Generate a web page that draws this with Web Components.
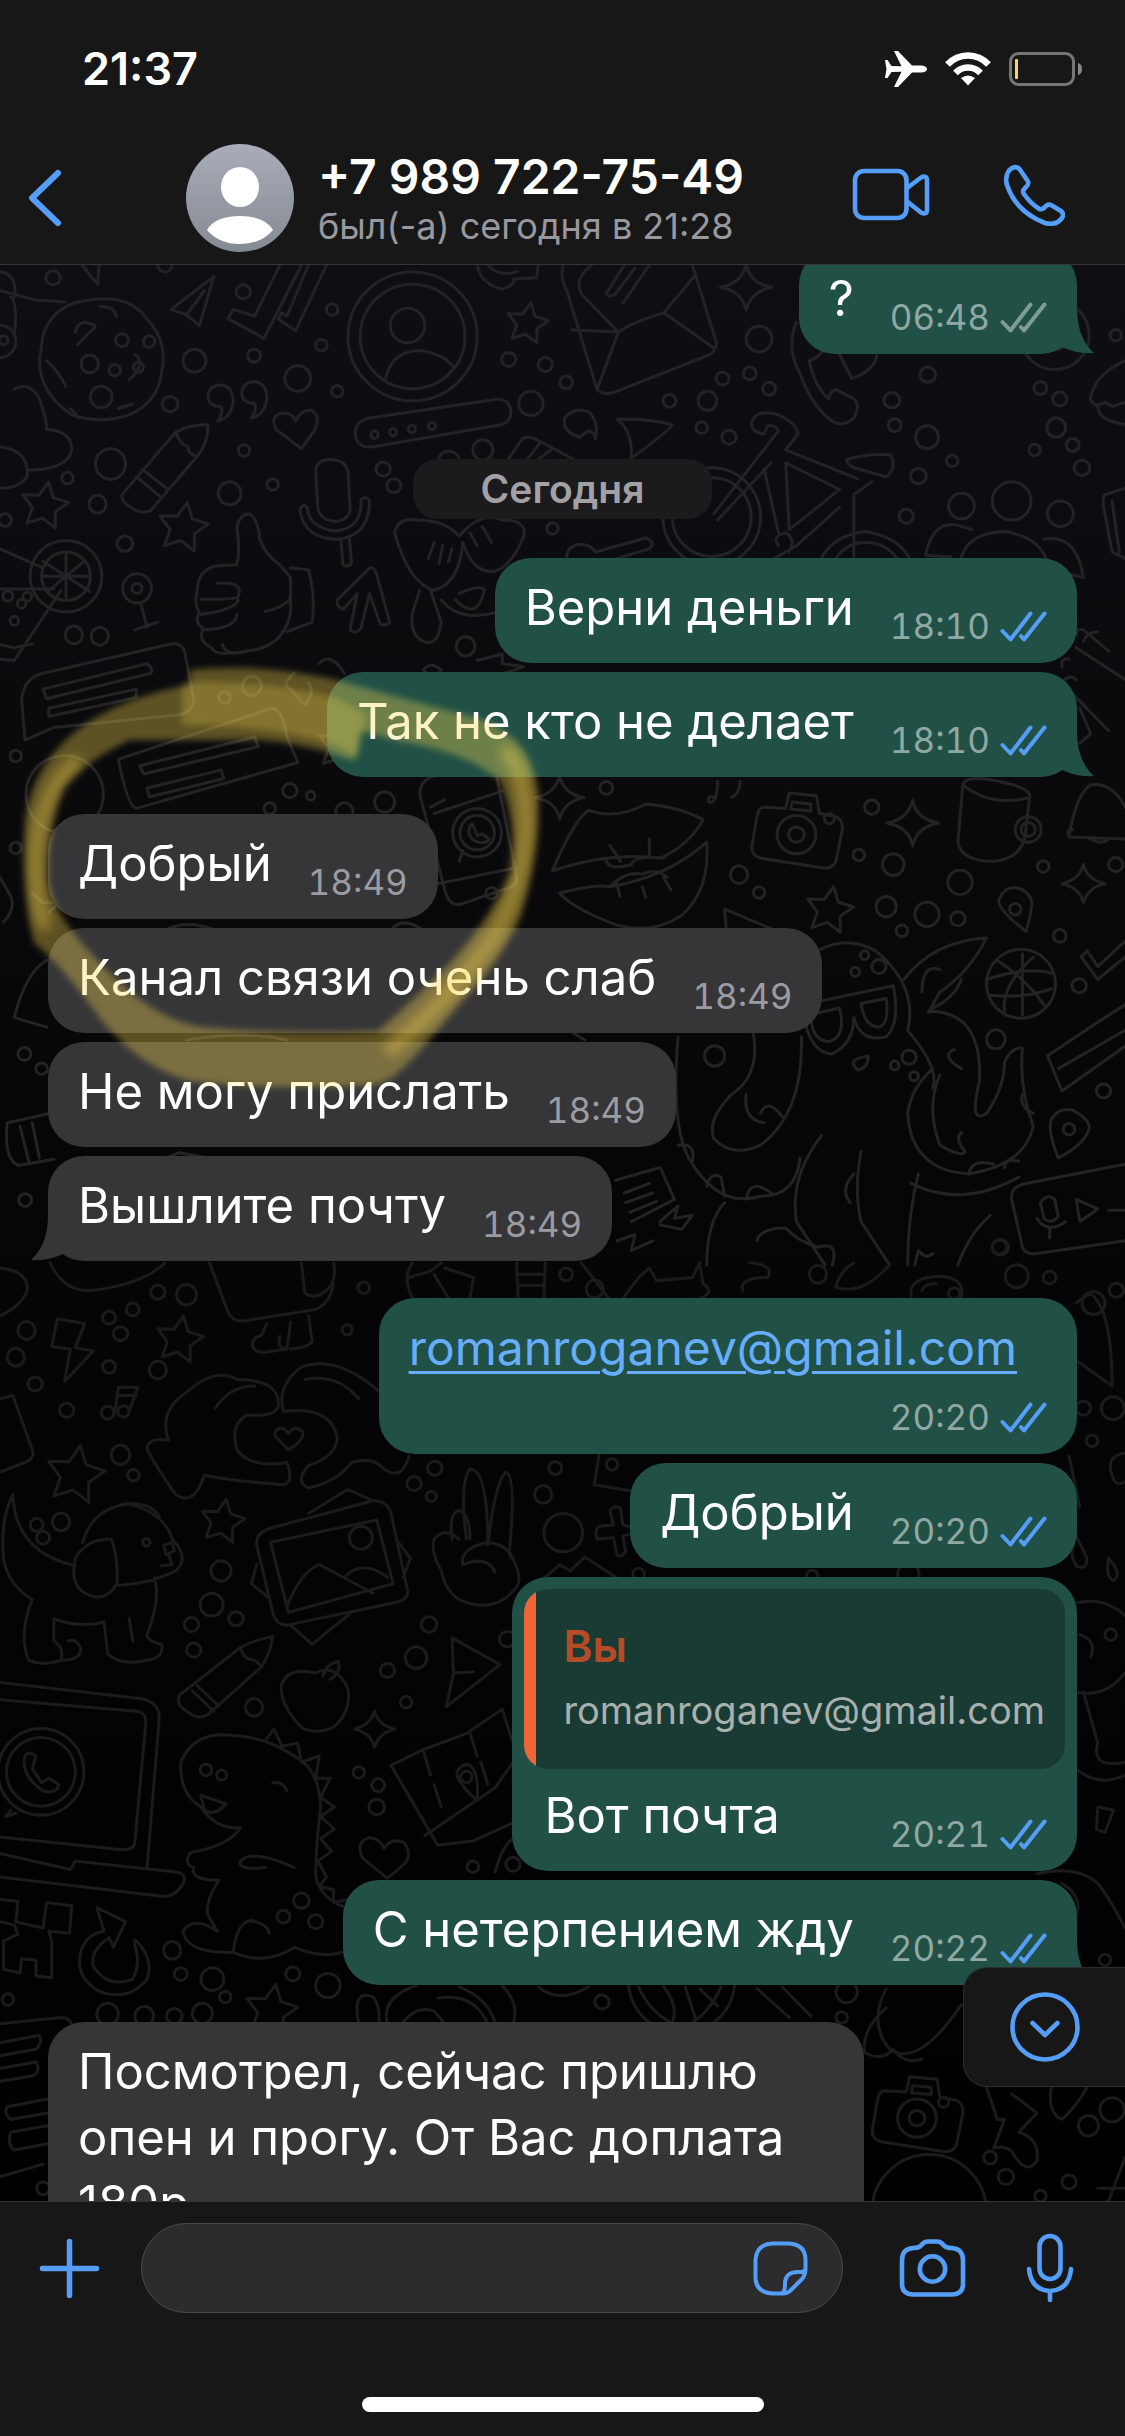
<!DOCTYPE html>
<html lang="ru">
<head>
<meta charset="utf-8">
<meta name="viewport" content="width=device-width, initial-scale=1">
<title>Чат</title>
<style>
  body {
    margin: 0;
    background: #171717;
    font-family: Inter, "Liberation Sans", sans-serif;
    color: #fff;
  }
</style>
</head>
<body>
<chat-screen>
  <status-bar slot="top" time="21:37"></status-bar>
  <chat-header slot="top">
    <span slot="name">+7 989 722-75-49</span>
    <span slot="seen">был(-а) сегодня в 21:28</span>
  </chat-header>

  <chat-message out tail read="no" time="06:48">?</chat-message>
  <chat-date>Сегодня</chat-date>
  <chat-message out time="18:10">Верни деньги</chat-message>
  <chat-message out tail time="18:10">Так не кто не делает</chat-message>
  <chat-message first time="18:49">Добрый</chat-message>
  <chat-message time="18:49">Канал связи очень слаб</chat-message>
  <chat-message time="18:49">Не могу прислать</chat-message>
  <chat-message tail time="18:49">Вышлите почту</chat-message>
  <chat-message out first stacked time="20:20"><a href="mailto:romanroganev@gmail.com">romanroganev@gmail.com</a></chat-message>
  <chat-message out time="20:20">Добрый</chat-message>
  <chat-message out time="20:21">
    <chat-quote slot="quote" author="Вы">romanroganev@gmail.com</chat-quote>
    Вот почта
  </chat-message>
  <chat-message out tail time="20:22">С нетерпением жду</chat-message>
  <chat-message first stacked>Посмотрел, сейчас пришлю опен и прогу. От Вас доплата 180р</chat-message>

  <chat-composer slot="bottom"></chat-composer>
</chat-screen>

<script>
  class StatusBar extends HTMLElement {
    constructor() {
      super();
      this.attachShadow({ mode: "open" });
      this.shadowRoot.innerHTML = `
        <style>
          :host {
            display: flex;
            align-items: center;
            justify-content: space-between;
            height: 132px;
            padding: 6px 42px 0 82px;
            box-sizing: border-box;
          }
          time { font-size: 45px; font-weight: 600; line-height: 54px; }
          div { display: flex; align-items: center; gap: 18px; }
          svg { display: block; }
        </style>
        <time>${this.getAttribute("time")}</time>
        <div>
          <svg width="42" height="38" viewBox="0 0 42 38" fill="#fff"><path d="M0 10h2.500l4 6 10 .3L9 1h4l14 14.500h10q5 1 5 3.500t-5 3.500H27L13 37H9l7.500-15.300-10 .3-4 6H0l1.500-9z"/></svg>
          <svg width="46" height="34" viewBox="0 0 46 34" fill="none" stroke="#fff" stroke-width="6.500"><path d="M2.500 12.500Q11 3.500 23 3.500T43.500 12.500M10.500 21Q15.500 15.500 23 15.500T35.500 21"/><path d="M16 26q7-5 14 0l-7 7.500z" fill="#fff" stroke="none"/></svg>
          <svg width="74" height="34" viewBox="0 0 74 34" fill="none"><rect x="1.500" y="1.500" width="63" height="31" rx="8" stroke="#757576" stroke-width="3"/><path d="M69 11q4 1 4 6t-4 6z" fill="#8a8a8b"/><rect x="6" y="7" width="3" height="20" rx="1" fill="#fbd64c"/></svg>
        </div>
      `;
    }
  }

  class ChatHeader extends HTMLElement {
    constructor() {
      super();
      this.attachShadow({ mode: "open" });
      this.shadowRoot.innerHTML = `
        <style>
          :host {
            display: flex;
            align-items: center;
            height: 133px;
            padding: 0 60px 0 26px;
            box-sizing: border-box;
            border-bottom: 1px solid #353537;
          }
          button { padding: 0; border: 0; background: none; color: #559ef8; }
          svg { display: block; }
          .back { width: 160px; }
          .who { flex: 1; padding: 2px 0 0 24px; }
          .name { font-size: 48px; font-weight: 600; line-height: 54px; }
          .seen { font-size: 36px; line-height: 44px; color: #98989f; }
          .calls { display: flex; gap: 73px; padding-bottom: 6px; align-items: center; }
        </style>
        <button class="back" aria-label="Назад">
          <svg width="36" height="58" viewBox="0 0 36 58" fill="none" stroke="currentColor" stroke-width="6" stroke-linecap="round" stroke-linejoin="round"><path d="M32 4 6 29l26 25"/></svg>
        </button>
        <svg width="108" height="108" viewBox="0 0 108 108">
          <defs><linearGradient id="g" x2="0" y2="1"><stop stop-color="#a9adb9"/><stop offset="1" stop-color="#858991"/></linearGradient></defs>
          <circle cx="54" cy="54" r="54" fill="url(#g)"/>
          <ellipse cx="54" cy="43" rx="19" ry="20" fill="#fff"/>
          <path d="M21 86q8-14 33-14t33 14q-12 14-33 14T21 86z" fill="#fff"/>
        </svg>
        <div class="who">
          <div class="name"><slot name="name"></slot></div>
          <div class="seen"><slot name="seen"></slot></div>
        </div>
        <div class="calls">
          <button aria-label="Видеозвонок">
            <svg width="78" height="54" viewBox="0 0 78 54" fill="none" stroke="currentColor" stroke-width="4.600" stroke-linejoin="round"><rect x="3" y="3" width="51.500" height="47" rx="9"/><path d="M54.500 20.500 69 9.500q6-3 6 3v29q0 6-6 3L54.500 33"/></svg>
          </button>
          <button aria-label="Позвонить">
            <svg width="62" height="62" viewBox="0 0 62 62" fill="none" stroke="currentColor" stroke-width="4.600" stroke-linejoin="round"><path d="M6 6.500Q12 .5 16.500 5L25 17.500q1 3-2 5.500-4.500 4-2 7 7 10 15.500 15 2.500 1 5-1.500 3-4 6.500-2.500l10 6q3.500 3 1 7-6 8-17 5Q13 48 4 21 1.500 13 6 6.500z"/></svg>
          </button>
        </div>
      `;
    }
  }

  class ChatDate extends HTMLElement {
    constructor() {
      super();
      this.attachShadow({ mode: "open" });
      this.shadowRoot.innerHTML = `
        <style>
          :host {
            display: block;
            align-self: center;
            margin: 96px 0 30px;
            padding: 0 68px;
            border-radius: 24px;
            background: #1b1b1e;
            color: #a2a2a6;
            font-size: 39px;
            font-weight: 600;
            line-height: 60px;
          }
        </style>
        <slot></slot>
      `;
    }
  }

  class ChatQuote extends HTMLElement {
    constructor() {
      super();
      this.attachShadow({ mode: "open" });
      this.shadowRoot.innerHTML = `
        <style>
          :host {
            display: block;
            margin: 12px 12px 0;
            padding: 26px 20px 28px 39px;
            border-radius: 24px;
            background: linear-gradient(90deg, #ef6536 12px, #193b34 12px);
            font-size: 38px;
            line-height: 62px;
            color: #a9b1af;
          }
          b { display: block; margin-bottom: 2px; font-size: 44px; font-weight: 600; color: #b64c27; }
        </style>
        <b>${this.getAttribute("author")}</b>
        <slot></slot>
      `;
    }
  }

  class ChatMessage extends HTMLElement {
    constructor() {
      super();
      this.attachShadow({ mode: "open" });
      const out = this.hasAttribute("out");
      const time = this.getAttribute("time");
      const tick = this.getAttribute("read") === "no" ? "#7d9d95" : "#559ef8";
      this.shadowRoot.innerHTML = `
        <style>
          :host {
            display: block;
            position: relative;
            align-self: flex-start;
            max-width: 816px;
            border-radius: 36px;
            background: var(--bubble);
            --bubble: #363638;
            --time: #9b9ba2;
            font-size: 49px;
            line-height: 66px;
          }
          :host([out]) {
            align-self: flex-end;
            --bubble: #215046;
            --time: #90a8a3;
          }
          :host([first]) { margin-top: 28px; }
          .row {
            display: flex;
            align-items: flex-end;
            justify-content: space-between;
            gap: 36px;
            padding: 17px 30px;
          }
          .text { margin-bottom: 5px; }
          :host([stacked]) .row { flex-direction: column; gap: 16px; }
          :host([stacked]) .text { margin: 0; padding-right: 30px; }
          .quoted { padding: 14px 30px 17px 32px; }
          .meta {
            display: flex;
            align-items: center;
            gap: 9px;
            font-size: 35px;
            font-variant-numeric: tabular-nums;
            line-height: 40px;
            color: var(--time);
          }
          svg { display: block; }
          .tail { position: absolute; bottom: 0; left: -17px; transform: scaleX(-1); }
          :host([out]) .tail { left: auto; right: -17px; transform: none; }
          ::slotted(a) {
            font-size: 48px;
            color: #66adfb;
            text-decoration-thickness: 3px;
            text-underline-offset: 6px;
          }
        </style>
        <slot name="quote"></slot>
        <div class="row">
          <div class="text"><slot></slot></div>
          ${time ? `<div class="meta">
            <time>${time}</time>
            ${out ? `<svg width="48" height="32" viewBox="0 0 48 32" fill="none" stroke="${tick}" stroke-width="4" stroke-linecap="round" stroke-linejoin="round"><path d="M3.500 21l8 8.500 20-26M22 26l3 3.500 20.500-26"/></svg>` : ""}
          </div>` : ""}
        </div>
        ${this.hasAttribute("tail") ? `<svg class="tail" width="57" height="45" viewBox="0 0 57 45"><path d="M40 0c0 22 8 36 17 44-12 1-23-2-32-6L10 20V0z" fill="var(--bubble)"/></svg>` : ""}
      `;
      if (this.querySelector("[slot=quote]")) {
        this.shadowRoot.querySelector(".row").classList.add("quoted");
      }
    }
  }

  // Wallpaper doodles: both halves are drawn on a 1568 unit square grid
  const camera = "M1065 850L1095 852 1100 828 1138 832 1142 860 1165 865Q1175 870 1174 885L1165 935Q1160 948 1145 945L1060 930Q1046 925 1048 910L1055 865Q1057 850 1065 850ZM1104 842L1130 845 1130 856 1102 853Z";
  const upper = {
    paths: [
      "M60 110Q75 60 125 55 180 45 205 85 235 120 225 170 220 215 180 235 140 250 100 235 55 200 55 150ZM105 105Q110 85 125 92 140 95 125 105L108 125M65 150Q80 165 92 190M188 140Q205 155 180 180M140 65Q160 65 162 80M98 225L110 240M165 225L185 218",
      "M0 10Q25 15 20 50M0 40L50 55 90 58M20 110Q25 60 15 50M20 195Q40 180 55 210 65 240 65 258 100 260 100 290 95 320 40 322M0 285Q40 290 38 330 30 350 0 350",
      "M298 18L238 70 260 78 278 95ZM260 78L285 40M115 0L128 20 136 30 138 0",
      "M390 0L355 80 325 70 318 84 368 115 420 0M430 0L400 80 392 75 388 85 412 103 455 0",
      "M537 180Q545 135 585 134 620 140 632 160",
      "M665 0Q670 30 700 38 720 30 715 22L748 20 750 0M680 0Q695 20 722 10",
      "M785 0Q780 20 790 40L832 195Q840 205 855 200L990 140Q1000 130 998 120L965 0M797 102L860 105M832 195L862 105Q880 90 925 75L995 130M925 75L970 15M810 45Q800 20 825 0M810 45L860 103M845 45L870 0M868 60L905 0M845 45Q850 52 858 45L885 5",
      "M1110 90Q1095 130 1115 170 1130 220 1160 245 1175 255 1190 240 1200 220 1190 210L1165 195Q1155 200 1155 210 1135 190 1128 150 1150 140 1145 128",
      "M1170 140L1187 178Q1220 165 1222 140M1568 150Q1530 170 1522 200 1515 215 1530 220 1530 245 1568 250M1530 220L1540 215 1550 222 1568 215",
      "M290 205Q292 188 308 188 325 190 325 215 322 240 303 245 312 232 308 222 290 222 290 205ZM337 200Q339 183 355 183 372 185 372 210 369 235 350 240 359 227 355 217 337 217 337 200Z",
      "M420 288L385 258Q375 235 395 232 408 232 412 245 420 225 435 228 448 240 438 260Z",
      "M515 240L690 211Q710 208 712 230 712 245 700 250L520 285Q497 288 495 265 495 245 515 240Z",
      "M170 360L245 262Q265 250 290 250 290 280 275 300L210 385Q195 392 180 378 168 370 170 360ZM245 262Q250 280 262 285 262 298 275 300M198 320L232 350M190 332L222 362",
      "M830 272Q835 245 820 230 800 222 787 240 783 262 808 270L820 260Q828 262 830 272M860 242Q900 240 937 250 935 258 880 303 882 260 860 242Z",
      "M705 310L728 272Q735 268 745 272L800 305M735 305L752 280M750 305L768 290M610 310Q612 292 625 292 638 292 640 305",
      "M995 390L1085 260Q1080 250 1070 252L1065 265Q1045 262 1048 245 1055 225 1085 235 1112 250 1112 265L1095 290 1195 335M1095 310L1170 352 1100 415ZM1180 305Q1210 295 1242 298 1250 320 1235 332L1190 318Q1180 312 1180 305ZM1190 460L1190 360 1215 340M1075 310L1000 400M1170 380L1110 440 1080 460M1145 460Q1160 425 1205 418 1250 425 1268 460M1165 460Q1180 435 1205 435 1235 435 1250 460M1065 320L1085 420M1085 440Q1075 425 1095 420 1110 430 1100 450",
      "M1290 455Q1300 400 1335 408L1355 415M1290 455L1325 458M1340 458Q1350 420 1400 418 1445 425 1458 460M1455 430Q1500 420 1510 490L1490 485M1568 350L1540 360Q1535 365 1540 390L1550 450 1568 460M1550 370L1560 450",
      "M440 325Q440 305 460 305 482 305 485 325L488 380Q488 400 468 402 445 400 443 380ZM418 385Q425 430 470 430 515 425 515 370 510 360 503 368 505 415 465 417 430 410 428 380 422 372 418 385M475 430L478 470Q485 475 490 468L487 430",
      "M330 470Q335 450 330 410 335 390 348 390 360 400 362 430 370 455 390 470L405 490 405 545Q395 600 345 605 300 615 295 600 275 590 283 570 270 560 278 545 270 530 275 510 275 480 300 472ZM303 499Q340 495 332 520 330 525 280 524M280 548Q330 540 332 525M283 572Q330 570 330 548M370 543Q400 535 405 520M405 475L430 478Q440 520 435 560L400 575",
      "M488 572L498 515 478 540Q468 535 470 525L515 475Q522 473 525 485L543 560Q540 567 530 563L515 515 503 570Q495 580 488 572",
      "M550 420Q555 395 580 400 620 400 640 425 670 385 700 400 735 400 730 425 715 470 690 480 660 485 645 435 640 500 605 510 570 500 550 420M600 510L615 560Q610 600 590 590 570 580 575 545L585 510M640 515Q670 500 675 510 665 560 635 525M605 435L597 460M617 440L612 468M630 445L625 465M655 420L665 440M672 410L685 435M615 525Q640 560 690 545",
      "M0 445L60 475M0 618L20 620 85 510M0 508L75 508M60 465L125 512M92 454V522M60 488H125M66 512L118 464M196 530L205 568M188 572L220 560M790 458Q790 440 810 438 825 440 830 450L900 428Q915 435 905 445L860 460",
      "M35 745L30 680Q35 645 60 640L235 595Q255 590 258 610L270 680Q270 700 250 705L75 725ZM60 665L205 625Q215 635 210 640L65 680ZM68 695L190 665 190 678 68 708Z",
      "M165 775L380 695Q395 700 400 740L415 780 190 852Q178 850 165 775M195 785L355 740 360 755 200 798ZM205 820L308 792 312 805 208 834Z",
      "M585 830Q585 805 610 800L690 790 720 960Q722 975 700 980L640 1003Q625 1003 620 980ZM600 850L620 838M605 860L700 825M610 970L720 945M665 620L700 610 700 625 730 630 700 641M640 935L645 918",
      "M655 880Q650 895 662 903 675 910 682 900L672 892 665 895 662 885 658 876Z",
      "M770 950Q800 870 820 855 860 870 900 845 950 850 980 870 960 910 920 930 850 920 770 950M780 985Q830 970 850 975 930 960 985 905 990 980 950 1020 910 1050 860 1035 800 1010 780 985M850 910L865 935M905 900L905 925M845 935Q850 950 880 940 885 925 925 930M850 975Q870 950 895 955 915 945 930 960M860 970L864 990M895 975L900 992M925 960L935 980",
      camera,
      "M1342 815Q1345 800 1385 808 1440 820 1435 835L1430 880Q1430 930 1385 935 1340 935 1335 905ZM1342 815Q1380 850 1435 835M1490 895Q1500 830 1520 815 1550 810 1568 850M1490 895Q1485 885 1495 885M1490 897L1568 900M1520 900Q1535 910 1545 900M995 835Q985 830 988 842 1000 845 1000 810M1020 835Q1030 830 1032 810",
      "M1500 650Q1490 640 1480 655L1545 730M1500 600L1568 650M1500 580Q1500 570 1510 572L1545 605M1510 590Q1515 575 1530 575M1480 630Q1478 615 1490 618M1505 695L1520 735 1505 750",
      "M1430 1045Q1390 1010 1392 995 1400 975 1415 976 1435 980 1438 1000 1437 1020 1430 1045M1475 1400Q1460 1360 1465 1340 1475 1320 1495 1325 1520 1340 1518 1355 1510 1380 1475 1400M1010 1010L1012 1040M1010 1010L1080 1043",
      "M1390 1090Q1430 1120 1455 1160M1440 1085Q1395 1130 1400 1170M1375 1120Q1430 1100 1465 1110M1378 1145Q1430 1150 1465 1135M1425 1080L1425 1175",
      "M1118 1160L1245 1130Q1255 1190 1235 1210 1200 1220 1190 1180 1190 1220 1160 1237 1125 1235 1118 1160M1130 1175L1170 1165Q1180 1210 1155 1218 1130 1215 1130 1175M1200 1158L1235 1150Q1240 1190 1225 1195 1205 1195 1200 1158",
      "M1140 1075Q1180 1050 1220 1075 1280 1130 1265 1200 1310 1260 1300 1290M1260 1120Q1300 1060 1375 1055 1350 1110 1310 1140 1290 1180 1295 1170 1370 1170 1365 1280 1350 1350 1375 1330 1400 1290 1400 1250 1410 1225 1425 1228 1420 1290 1440 1350 1430 1410 1350 1425 1270 1420 1265 1330 1270 1290 1300 1260",
      "M1285 1140Q1285 1095 1310 1105M1300 1165Q1330 1150 1340 1120M1310 1270Q1290 1320 1310 1380 1340 1400 1345 1390 1330 1370 1340 1360M1340 1260Q1310 1240 1330 1230M1440 1330Q1420 1320 1425 1300M1400 1415Q1400 1400 1420 1405M1350 1425Q1355 1400 1385 1410",
      "M945 1210Q935 1350 960 1400 1000 1480 1060 1460 1110 1460 1115 1400M1050 1205Q1060 1270 1020 1300 985 1340 995 1370 1020 1400 1060 1380 1120 1330 1117 1210M1145 1365Q1100 1430 1110 1500L1150 1568M1200 1390Q1190 1450 1200 1500L1240 1568M985 1568Q985 1500 1010 1470M1265 1568Q1265 1490 1280 1425M1270 1440Q1340 1480 1420 1430M1040 1300Q1035 1340 1065 1345M1060 1330Q1070 1305 1090 1335M945 1380Q970 1375 965 1405M985 1445Q990 1420 1005 1430L1010 1460M1040 1465Q1045 1430 1075 1455M1185 1470Q1170 1450 1190 1425",
      "M1190 1255Q1185 1245 1210 1240 1210 1260 1195 1262ZM1460 1240L1540 1180 1568 1160M1460 1240L1480 1295 1568 1225M1475 1260L1568 1200M1568 1060L1530 1100 1515 1075 1507 1085 1530 1120 1568 1085",
      "M1568 1410L1430 1440Q1408 1445 1410 1465L1425 1540Q1428 1552 1445 1550L1568 1530M1450 1470L1455 1495Q1465 1505 1475 1492L1470 1465Q1460 1455 1450 1470M1445 1495Q1460 1520 1485 1500M1463 1510V1525M1500 1465L1530 1480 1505 1500ZM1545 1482H1568",
      "M858 1435L920 1415 940 1465 880 1500M870 1455L905 1440M872 1470L910 1455M878 1485L915 1468M920 1500L945 1475 940 1495 965 1490 950 1512 920 1505M860 1530L885 1520 880 1545 910 1530M1055 1530Q1060 1510 1095 1510 1110 1530 1140 1540 1170 1530 1160 1568M1380 1490Q1350 1520 1335 1568M1275 1568L1280 1545Q1290 1560 1300 1550",
      "M10 1345L70 1330M10 1345Q5 1400 25 1412L75 1402M28 1350L40 1405M45 1345L55 1400M0 960L15 990Q22 1010 5 1030M45 985L60 1000 82 1000 68 1015M20 1180Q35 1110 65 1090M20 1180L65 1195M230 1043Q260 1025 300 1043M545 1043Q560 1020 590 1043M260 1215Q340 1200 400 1215M230 1400L250 1392 290 1400",
      "M0 595L20 600 45 594M800 1205L815 1215M310 595Q315 615 345 605M590 635Q600 620 615 635L605 650ZM410 640Q390 660 405 665L425 690Q440 670 430 655M445 625Q460 605 480 640"
    ],
    dots: [[74,20,10],[339,42,10],[230,0,10],[463,70,8],[448,126,8],[354,142,9],[271,150,16],[415,178,18],[237,218,11],[470,198,8],[709,148,10],[760,156,10],[789,184,9],[740,217,17],[1058,116,18],[933,213,9],[986,213,13],[1007,178,9],[1045,170,9],[1072,194,9],[978,255,8],[1016,270,10],[154,312,21],[340,291,8],[320,358,16],[380,344,8],[94,334,8],[136,375,12],[7,400,9],[174,437,11],[534,320,10],[549,346,10],[673,290,14],[770,413,8],[1243,212,11],[1247,251,9],[1292,270,16],[1450,193,9],[1477,210,10],[1472,255,13],[1442,290,8],[1495,282,9],[1327,307,8],[1280,331,11],[1508,318,11],[1263,394,10],[103,580,12],[139,582,12],[38,520,6],[11,519,7],[30,531,6],[20,558,6],[649,598,13],[22,770,8],[404,824,10],[433,832,6],[376,852,8],[480,857,12],[536,842,14],[351,660,13],[313,678,8],[22,914,8],[845,820,9],[1215,850,10],[1197,925,8],[1245,940,15],[1338,968,17],[1454,943,8],[1555,940,10],[1030,956,12],[1058,984,8],[1235,1006,14],[1292,1018,17],[1335,1025,10],[1257,1044,8],[1477,1052,9],[1205,1082,6],[1225,1100,10],[1192,1108,6],[1504,1130,10],[1388,1214,13],[996,1240,14],[1267,1242,10],[1247,1255,6],[1274,1272,6],[34,1237,9],[58,1260,8],[35,1466,9],[1538,1295,10],[1394,1540,11],[125,155,12],[170,118,9],[208,120,8],[160,165,8],[141,207,15],[193,160,7],[5,118,6],[548,262,5],[574,257,5],[602,252,5],[522,266,5],[1293,172,11],[1555,110,8]],
    rings: [[575,112,90],[575,112,73],[568,95,24],[1470,110,48],[1470,110,20],[0,120,22],[992,395,68],[992,395,55],[92,488,50],[92,488,34],[191,507,20],[191,507,7],[1410,370,27],[1340,378,18],[1478,390,18],[90,830,54],[665,890,34],[665,890,24],[1110,893,27],[1110,893,11],[1156,868,7],[1433,885,18],[1433,885,10],[1415,1010,8],[1490,1355,8],[1423,1127,48],[685,985,8]],
    stars: [[735,92,30],[62,378,34],[255,412,36],[1156,1012,34],[475,755,34]],
    sparks: [[1040,35,36],[1272,875,36],[1510,970,30],[780,835,34]]
  };
  const lower = {
    paths: [
      "M80 185L118 192 105 230 130 235 90 283 98 232 72 228ZM160 330L165 292H192L180 330M163 305H190",
      "M0 105Q40 110 38 140 30 165 0 180M70 97Q90 145 130 140 200 130 230 97M292 97L318 175Q325 190 340 188L440 170Q460 160 465 130M420 97L425 145Q440 155 455 140 470 125 465 97M372 192L365 210Q350 215 352 228 355 238 370 237L400 232 405 190M400 232Q385 230 390 212M430 180L435 220Q430 230 405 232",
      "M235 375Q220 330 260 300 300 260 330 280 390 280 388 320 385 340 345 335 320 350 330 390 350 420 400 410 410 440 395 445 330 440 285 430 270 480 245 460 225 430 205 390 205 370 235 375M300 325Q320 290 355 290M395 330Q385 290 420 260 470 240 530 300M395 330Q460 320 470 370 470 400 430 415 410 440 430 450 470 440 490 410 520 400 535 420 560 440 570 400M500 310Q470 270 425 280M402 390L383 368Q385 352 397 358L402 365Q410 350 422 362 425 375 402 390",
      "M0 310L18 305 45 390Q50 405 30 412L0 425M18 460Q0 500 5 560 10 600 45 625 25 680 40 720 60 730 85 720 90 700 75 690L75 655Q110 670 145 660L150 710Q170 730 205 720 230 715 225 695 205 690 205 680 225 620 215 590M18 460Q20 550 105 572M85 720Q115 720 112 700 105 685 95 690M180 655L185 690M115 535Q130 480 180 475 230 490 240 530 265 560 245 580 210 600 165 603M105 560Q120 530 155 530 165 560 163 600 150 625 130 620 95 610 105 560M170 475Q210 470 222 495M228 540L240 535 243 548 232 555ZM235 555L240 570 225 572",
      "M380 512L520 470Q540 470 545 490L568 610Q570 625 550 630L400 665Q385 665 380 645L358 540Q355 520 380 512M377 535L525 500 548 600 402 645ZM400 635Q420 580 445 570L520 615M480 590Q505 560 540 590M430 490L485 452 520 470M405 665L435 695 490 645M552 530L572 560 562 590M358 570L350 600 372 620",
      "M650 530Q640 440 655 420 680 420 680 540 690 440 705 425 720 430 710 550 730 590 720 605 690 650 640 625 620 610 615 580 600 550 605 530 620 510 640 530M630 530Q625 490 640 485 655 490 655 530M645 570Q640 545 680 535 710 540 712 560M645 570Q680 555 690 582",
      "M835 510L855 508 850 485Q858 475 865 482L868 508 882 512Q888 520 880 522L868 525 872 550Q865 560 860 555L855 528 832 530Q828 515 835 510M755 595L780 570 795 580 815 558 865 595M835 398L828 445 882 455M810 97L850 155M870 150L890 120 905 105 915 125 965 120 975 97 980 130Q1000 145 970 155",
      "M250 775L335 700Q355 688 380 683 378 705 365 730L290 805Q275 815 260 800 245 790 250 775M335 700Q340 720 355 720L365 730M275 760L305 792M268 768L298 800",
      "M440 740Q470 725 485 765 490 800 465 825 440 838 420 825 390 790 392 760 400 730 440 740M450 745Q455 725 472 722 475 740 460 750M630 685L697 727 622 793 632 740ZM632 740L660 738",
      "M0 755L195 780Q222 785 222 810L205 1045M0 782L190 800Q205 802 203 820L188 1005Q187 1018 170 1017L0 997M0 1023L98 1048 105 1035 245 1052Q262 1055 255 1070 245 1092 225 1090L0 1060M15 955L8 965 22 960M35 870Q28 900 60 925 80 930 82 915L68 905 58 912 45 890 50 870Q40 862 35 870",
      "M280 950Q250 930 252 880 270 830 325 838 370 840 410 870 445 890 447 950 440 1010 440 1060 450 1100 490 1110M280 950Q300 985 335 983 320 1010 265 1022 255 1040 270 1045 265 1065 305 1065 285 1100 290 1120L303 1145Q270 1120 255 1145 260 1180 325 1178 330 1130 350 1128 375 1135 375 1148M325 1178Q370 1200 410 1170 450 1190 485 1175M370 845L382 828 393 855 415 850 420 880 445 870 440 905 460 905 447 935 466 950 447 965 466 985 447 1000 462 1020 443 1035 455 1060 445 1075 465 1080 465 1100 485 1095M280 932L315 945Q300 965 285 955ZM380 912Q395 910 400 925M370 1045Q330 1050 335 1035 350 1015 410 1045",
      "M545 885L590 860 650 835 700 797 715 850M545 885L610 1010 660 1003 715 975M592 995L690 920 715 880M610 1010L600 990M590 862L600 900M605 915L615 950M655 835L665 870M670 880L680 915M665 940Q635 910 637 895 645 880 655 885 668 895 665 940M540 1062L505 1030Q495 1005 515 998 530 1000 535 1015 545 998 562 1005 575 1020 565 1038ZM690 1052Q700 1010 715 1000",
      "M0 1095L25 1098 22 1130 60 1140 65 1100 100 1105 97 1148 68 1145 72 1160 72 1218 50 1215 50 1190 30 1188 28 1210 5 1205 5 1160 25 1150 20 1135 0 1130",
      "M190 1160Q215 1190 205 1220 180 1255 140 1240 105 1220 112 1180 118 1150 145 1145L135 1108 175 1130 158 1170 152 1155Q125 1175 130 1200 150 1235 185 1220 195 1200 190 1175 185 1155 190 1160",
      "M0 1290L85 1280Q100 1280 100 1295M0 1320L55 1308Q60 1320 50 1330L0 1340M0 1360L50 1350Q58 1365 45 1372L0 1380M10 1420L66 1408M10 1420Q5 1430 15 1440L66 1430M66 1450L15 1460Q10 1480 20 1488L66 1478M0 1530L60 1510",
      "M500 1290Q490 1235 520 1248 530 1260 528 1288M580 1230Q530 1250 540 1290M700 1230Q725 1260 715 1290M560 1290Q580 1260 605 1270L620 1290M610 1250Q660 1240 680 1290M640 1232Q680 1250 690 1288M890 1232Q905 1270 935 1288M1005 1232Q990 1270 965 1288M925 1232Q945 1260 938 1285M955 1232L970 1284M975 1235L1000 1262M1055 1235L1100 1280M1090 1232L1130 1278M750 1232Q780 1260 820 1232",
      "M1235 1235Q1210 1290 1240 1330 1280 1360 1340 1260M1235 1265Q1200 1300 1205 1335 1230 1350 1245 1330M1245 1330Q1260 1355 1285 1345M1375 1390L1390 1440 1400 1440 1385 1485Q1400 1480 1410 1490 1430 1530 1445 1505 1450 1470 1420 1460L1445 1430 1410 1400M1465 1390Q1460 1430 1480 1440 1500 1420 1515 1390M1568 1500L1545 1568M1530 1548H1568",
      "M1500 160Q1520 140 1525 150 1550 180 1550 290L1500 250M1568 395Q1540 400 1550 430 1555 450 1568 440M1490 400L1505 480M1500 525Q1488 550 1500 572 1515 580 1515 560ZM1545 560Q1540 590 1552 595 1565 585 1545 560M1500 630Q1540 620 1568 650M1500 770Q1540 780 1568 740M1505 680Q1530 690 1520 715M1510 770L1530 850Q1520 890 1568 880M1530 950L1552 955 1540 990 1528 985ZM1500 890Q1530 920 1568 900M1445 1055Q1500 1040 1530 1070 1545 1090 1568 1140M1480 1070Q1510 1090 1500 1120M1270 150Q1265 120 1310 118 1345 120 1340 150M1285 140Q1290 128 1305 130M1045 97Q1080 100 1070 120 1030 120 1035 140M1190 97Q1170 110 1165 135 1200 150 1240 100",
      "M575 97Q560 120 575 152M570 120L600 110 615 97M605 115L625 152M620 105L660 120 655 152M720 97L722 150M760 97L758 150M722 115H758M722 132H758"
    ],
    dots: [[37,203,12],[22,245,12],[152,183,9],[185,170,9],[168,208,10],[220,143,10],[260,147,14],[507,136,8],[484,202,7],[152,260,9],[220,265,12],[49,287,10],[93,328,10],[168,398,13],[186,430,8],[51,508,9],[85,503,12],[60,528,9],[204,535,5],[308,580,14],[295,633,16],[329,655,10],[267,664,10],[270,704,10],[598,664,11],[580,716,15],[540,736,10],[566,786,8],[354,794,12],[707,687,11],[577,443,10],[606,419,10],[601,463,7],[757,460,12],[774,419,9],[789,115,9],[829,138,12],[853,413,8],[890,585,8],[500,896,8],[527,916,9],[525,950,11],[659,1044,8],[715,1040,10],[287,892,8],[309,900,7],[420,1097,11],[395,1122,9],[440,1130,10],[240,1175,12],[252,1212,9],[296,1220,16],[314,1248,8],[408,1212,10],[457,1230,17],[11,1252,8],[150,1275,15],[201,1278,13],[243,1278,11],[282,1274,14],[839,1256,10],[1180,1240,15],[1550,1425,17],[1517,1450,14],[1380,1500,9],[1402,1530,11],[1490,1538,10],[1450,1560,8],[1173,1280,8],[60,1548,9],[1417,118,16],[1463,120,9],[1393,72,10],[1556,140,10],[1510,325,10],[1551,325,16],[1522,376,8],[1540,1190,8],[1548,680,8],[1132,588,8],[1140,115,12],[1330,145,8]],
    rings: [[150,332,9],[172,330,8],[503,528,16],[57,895,60],[57,895,48],[650,903,8],[785,520,27],[1278,1438,27],[1278,1438,11],[1315,1413,7],[1295,1585,80],[950,1222,74],[1266,585,15],[1524,160,16]],
    stars: [[250,218,34],[105,430,42],[310,503,32],[378,1270,38]],
    sparks: [[522,828,28]]
  };

  const starPath = (x, y, r) => "M" + Array.from({ length: 10 }, (_, i) => {
    const a = i * Math.PI / 5 - 1.4;
    const k = i % 2 ? r * 0.5 : r;
    return `${(x + k * Math.cos(a)).toFixed(1)} ${(y + k * 1.12 * Math.sin(a)).toFixed(1)}`;
  }).join("L") + "Z";
  const sparkPath = (x, y, r) => `M${x} ${y - r}Q${x + 5} ${y - 6} ${x + r} ${y}Q${x + 6} ${y + 6} ${x} ${y + r}Q${x - 5} ${y + 6} ${x - r} ${y}Q${x - 6} ${y - 6} ${x} ${y - r}Z`;
  const doodles = set => [
    ...set.paths.map(d => `<path d="${d}"/>`),
    ...[...set.dots, ...set.rings].map(([x, y, r]) => `<ellipse cx="${x}" cy="${y}" rx="${r}" ry="${Math.round(r * 1.125)}"/>`),
    ...set.stars.map(s => `<path d="${starPath(...s)}"/>`),
    ...set.sparks.map(s => `<path d="${sparkPath(...s)}"/>`)
  ].join("");

  class ChatWallpaper extends HTMLElement {
    constructor() {
      super();
      this.attachShadow({ mode: "open" });
      this.shadowRoot.innerHTML = `
        <style>
          :host {
            display: block;
            position: absolute;
            inset: 0;
            background: linear-gradient(#0f0f13, #060608 45%, #010102);
          }
          svg { display: block; width: 100%; height: 100%; }
          path, ellipse { vector-effect: non-scaling-stroke; }
        </style>
        <svg viewBox="0 0 1125 1936" preserveAspectRatio="xMidYMin slice" fill="none" stroke-width="3" stroke-linejoin="round" stroke-linecap="round" aria-hidden="true">
          <g stroke="#232326" transform="scale(.7175 .6378)">${doodles(upper)}</g>
          <g stroke="#1b1b1d" transform="translate(0 936) scale(.7175 .6378)">${doodles(lower)}<path transform="translate(168 545)" d="${camera}"/></g>
        </svg>
      `;
    }
  }

  // Loop drawn by hand with a yellow highlighter over the messages
  class MarkerLoop extends HTMLElement {
    constructor() {
      super();
      this.attachShadow({ mode: "open" });
      this.shadowRoot.innerHTML = `
        <style>
          :host { display: block; position: absolute; left: 0; top: 388px; pointer-events: none; }
          svg { display: block; }
        </style>
        <svg width="560" height="450" viewBox="0 0 560 450" aria-hidden="true">
          <defs>
            <filter id="soft" x="-10%" y="-10%" width="120%" height="120%"><feGaussianBlur stdDeviation="3"/></filter>
            <filter id="softer" x="-10%" y="-10%" width="120%" height="120%"><feGaussianBlur stdDeviation="6"/></filter>
          </defs>
          <g filter="url(#soft)" fill="#ffdc50">
            <path fill-opacity=".34" fill-rule="evenodd" d="M190 17Q260 10 337 27 410 48 474 64 532 82 538 140 540 200 520 265 500 310 460 350 420 400 400 418 385 432 370 432 270 438 190 428 140 415 100 365 60 310 34 290 22 240 25 170 28 130 57 96 100 48 190 32ZM130 87Q90 105 64 134 46 180 48 230 55 265 100 310 150 365 200 374 290 382 378 378 410 350 450 310 490 265 512 220 518 170 500 128 470 100 400 88L360 78 355 108 336 102Q300 90 260 87Z"/>
            <path fill-opacity=".24" d="M182 30Q260 26 337 45L366 62 358 104 335 92Q270 72 182 72Z"/>
          </g>
          <g filter="url(#softer)" fill="none" stroke="#ffdc50" stroke-opacity=".36" stroke-linecap="round">
            <path stroke-width="14" d="M74 110Q40 140 36 200 34 240 44 270"/>
            <path stroke-width="16" d="M508 100Q526 120 526 180 518 250 488 292 450 345 392 395"/>
          </g>
        </svg>
      `;
    }
  }

  class ChatComposer extends HTMLElement {
    constructor() {
      super();
      this.attachShadow({ mode: "open" });
      this.shadowRoot.innerHTML = `
        <style>
          :host { display: block; padding: 21px 0 24px; border-top: 1px solid #353537; }
          .bar { display: flex; align-items: center; padding: 0 51px 0 39px; }
          button { padding: 0; border: 0; background: none; color: #559ef8; }
          svg { display: block; fill: none; stroke: currentColor; stroke-linecap: round; stroke-linejoin: round; }
          .field {
            flex: 1;
            min-width: 0;
            display: flex;
            align-items: center;
            height: 90px;
            margin: 0 56px 0 41px;
            padding: 0 34px 0 36px;
            box-sizing: border-box;
            border: 1px solid #4a4a4c;
            border-radius: 45px;
            background: #2c2c2e;
          }
          input {
            flex: 1;
            min-width: 0;
            border: 0;
            outline: 0;
            background: none;
            font: 49px Inter, sans-serif;
            color: #fff;
          }
          .mic { margin-left: 60px; }
          .home { width: 402px; height: 15px; margin: 84px auto 0; border-radius: 8px; background: #fff; }
        </style>
        <div class="bar">
          <button aria-label="Прикрепить">
            <svg width="61" height="61" viewBox="0 0 61 61" stroke-width="5.500"><path d="M30.500 3.500v54M3.500 30.500h54"/></svg>
          </button>
          <div class="field">
            <input type="text" aria-label="Сообщение">
            <button aria-label="Стикеры">
              <svg width="55" height="55" viewBox="0 0 55 55" stroke-width="4"><path d="M19 2.500h17Q52.500 3.500 52.500 19v9q0 6-3.500 10L37 50q-3 2.500-7 2.500H19Q2.500 51 2.500 36V19Q3.500 3.500 19 2.500zM52 29q-1 2-5 2-15-1-15 12 0 8-3 9"/></svg>
            </button>
          </div>
          <button aria-label="Камера">
            <svg width="67" height="58" viewBox="0 0 67 58" stroke-width="4.600"><path d="M14 9q6 0 8-2.500 3-4 7-4h9q4 0 7 4Q47 9 53 9q11 1 11 12v24q0 10-11 10.500H14Q3 55 3 45V21Q3 10 14 9z"/><circle cx="33.500" cy="30" r="12.700"/></svg>
          </button>
          <button class="mic" aria-label="Голосовое сообщение">
            <svg width="48" height="70" viewBox="0 0 48 70" stroke-width="4.600"><rect x="13.500" y="3" width="21" height="43" rx="10.500"/><path d="M3 36q2 21 21 22 19-1 21-22M24 58v9"/></svg>
          </button>
        </div>
        <div class="home"></div>
      `;
    }
  }

  class ChatScreen extends HTMLElement {
    constructor() {
      super();
      this.attachShadow({ mode: "open" });
      this.shadowRoot.innerHTML = `
        <style>
          :host {
            display: grid;
            grid-template: auto minmax(0, 1fr) auto / minmax(0, 1fr);
            height: 100vh;
          }
          main { position: relative; overflow: hidden; }
          .list {
            position: relative;
            display: flex;
            flex-direction: column;
            gap: 9px;
            margin-top: -16px;
            padding: 0 48px;
          }
          .down {
            position: absolute;
            right: 0;
            bottom: 114px;
            display: flex;
            align-items: center;
            justify-content: center;
            width: 162px;
            height: 120px;
            padding: 0;
            border: 1px solid #2e2e30;
            border-right: 0;
            border-radius: 24px 0 0 24px;
            background: #171717;
          }
        </style>
        <header><slot name="top"></slot></header>
        <main>
          <chat-wallpaper></chat-wallpaper>
          <div class="list"><slot></slot></div>
          <marker-loop></marker-loop>
          <button class="down" aria-label="Вниз">
            <svg width="70" height="70" viewBox="0 0 70 70" fill="none" stroke="#559ef8" stroke-width="4.600" stroke-linecap="round" stroke-linejoin="round"><circle cx="35" cy="35" r="32.500"/><path d="M22.500 31 35 43l12.500-12"/></svg>
          </button>
        </main>
        <footer><slot name="bottom"></slot></footer>
      `;
    }
  }

  customElements.define("status-bar", StatusBar);
  customElements.define("chat-header", ChatHeader);
  customElements.define("chat-date", ChatDate);
  customElements.define("chat-quote", ChatQuote);
  customElements.define("chat-message", ChatMessage);
  customElements.define("chat-wallpaper", ChatWallpaper);
  customElements.define("marker-loop", MarkerLoop);
  customElements.define("chat-composer", ChatComposer);
  customElements.define("chat-screen", ChatScreen);
</script>
</body>
</html>
